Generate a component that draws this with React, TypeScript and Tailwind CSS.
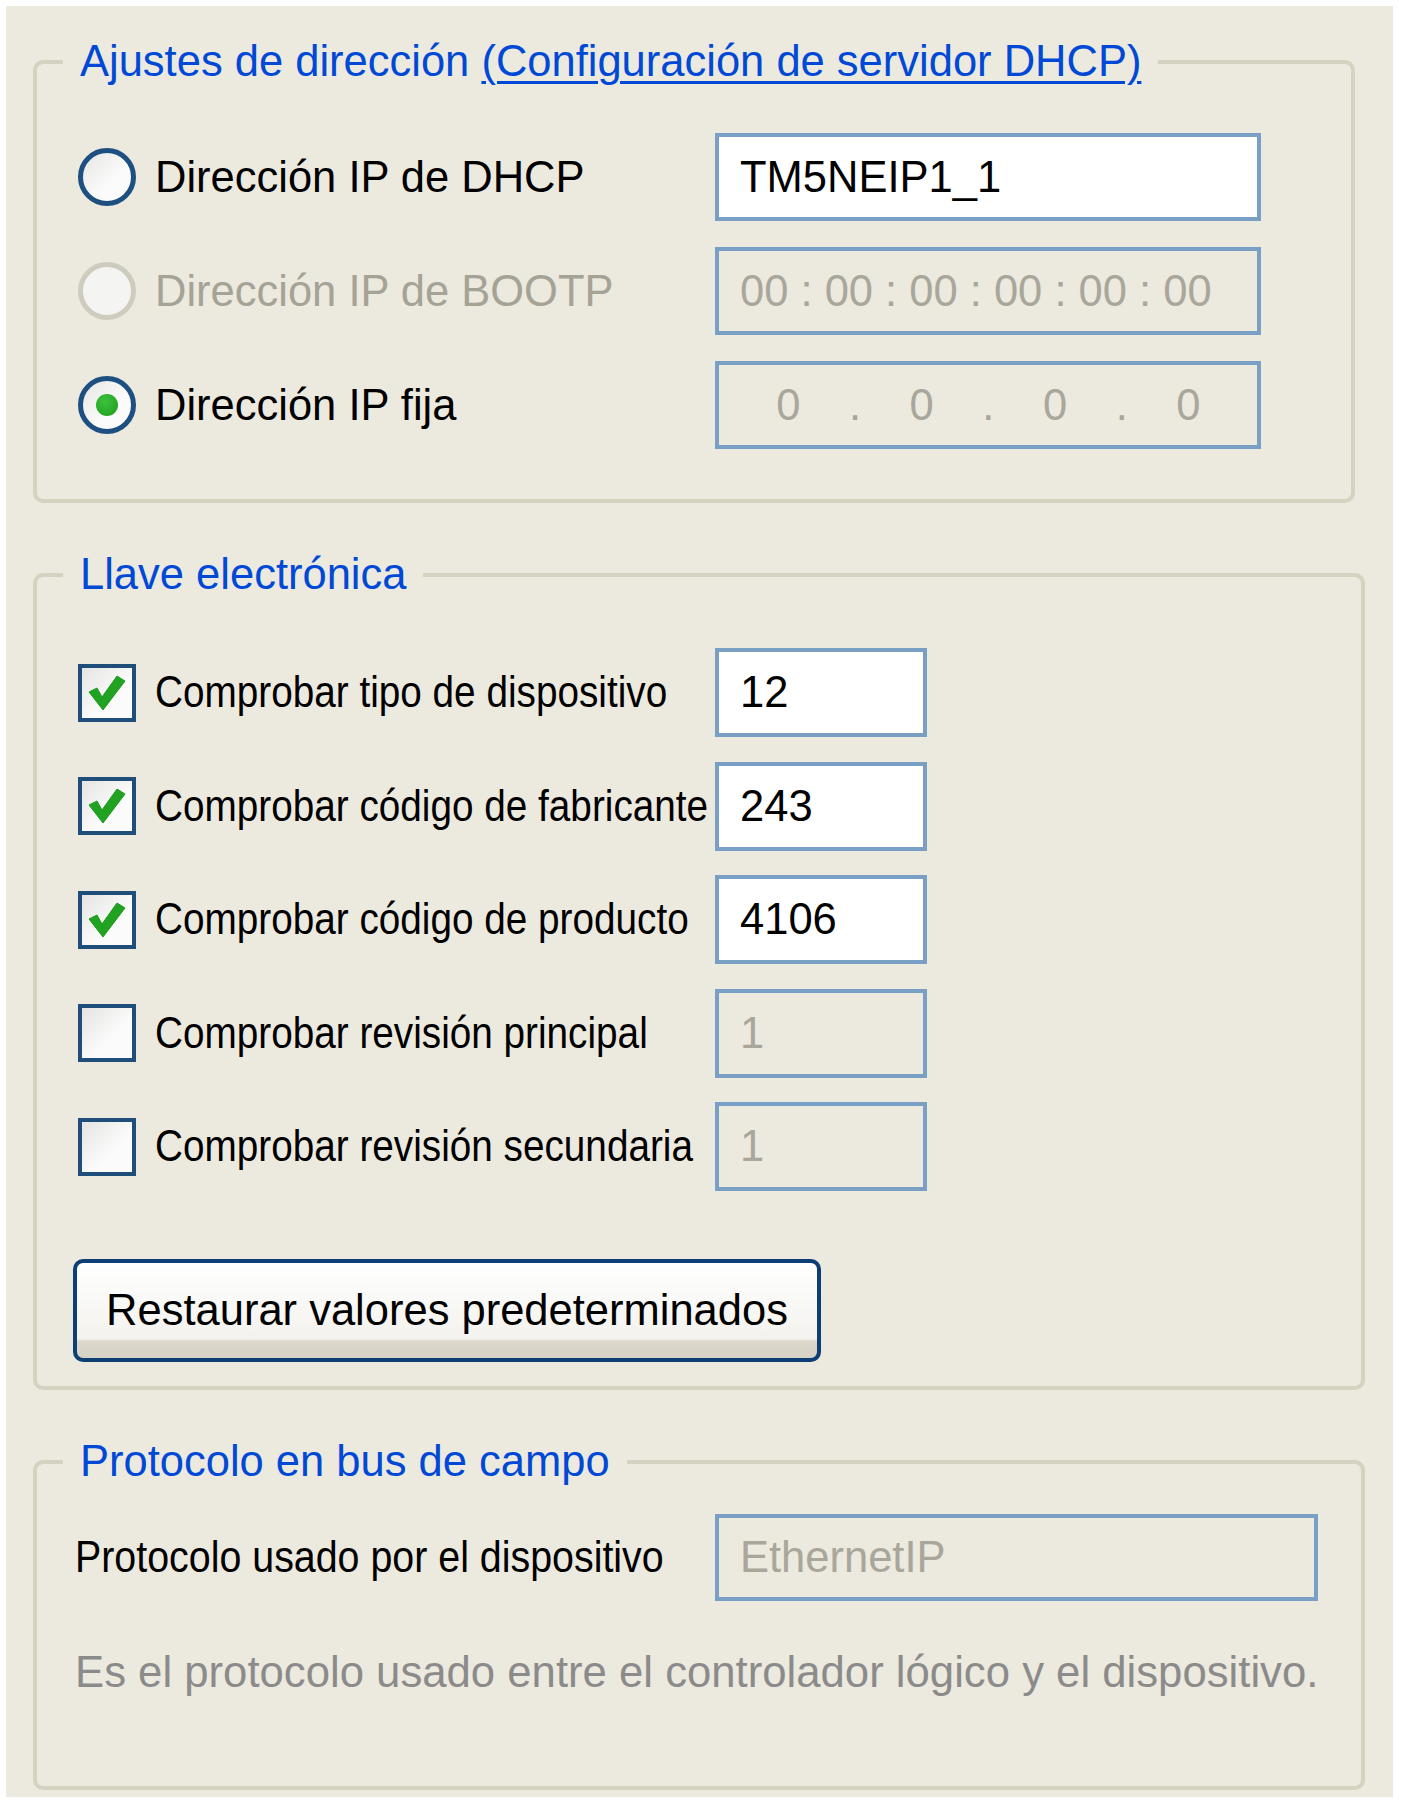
type RowProps = { children: React.ReactNode };

const font = "font-['Liberation_Sans',Arial,sans-serif]";

function Radio({ state }: { state: "off" | "on" | "disabled" }) {
  const ring =
    state === "disabled" ? "border-[#cecbbf] bg-[#f4f4f2]" : "border-[#1d5080] bg-[linear-gradient(135deg,#e6e6e4,#fbfbfb_60%)]";
  return (
    <span className={`flex h-[58px] w-[58px] shrink-0 items-center justify-center rounded-full border-[5px] ${ring}`}>
      {state === "on" && (
        <span className="h-[22px] w-[22px] rounded-full bg-[radial-gradient(circle_at_40%_35%,#3dc23d,#1c9a1c)]" />
      )}
    </span>
  );
}

function Checkbox({ checked }: { checked: boolean }) {
  return (
    <span className="flex h-[58px] w-[58px] shrink-0 items-center justify-center border-[4px] border-[#1f4e7b] bg-[linear-gradient(135deg,#e4e4e2,#fbfbfb_60%)]">
      {checked && (
        <svg viewBox="0 0 50 50" className="h-[50px] w-[50px]">
          <path d="M7 24 L15 20 L20 29 L35 8 L43 13 L21 42 Z" fill="#21a221" stroke="#1e9a1e" strokeWidth="1" strokeLinejoin="round" />
        </svg>
      )}
    </span>
  );
}

function Field({ value, enabled, w, h }: { value: React.ReactNode; enabled: boolean; w: string; h: string }) {
  return (
    <div
      className={`flex items-center border-[4px] border-[#7a9fc5] pl-[21px] ${w} ${h} ${
        enabled ? "bg-white text-black" : "bg-transparent text-[#a9a69b]"
      }`}
    >
      {value}
    </div>
  );
}

function Legend({ children }: RowProps) {
  return <legend className="-ml-[15px] px-[17px] text-[43.5px] leading-[49px] text-[#0048d6]">{children}</legend>;
}

const radios = [
  { label: "Dirección IP de DHCP", state: "off" as const, value: "TM5NEIP1_1", enabled: true },
  { label: "Dirección IP de BOOTP", state: "disabled" as const, value: "00 : 00 : 00 : 00 : 00 : 00", enabled: false },
  { label: "Dirección IP fija", state: "on" as const, value: null, enabled: false },
];

const checks = [
  { label: "Comprobar tipo de dispositivo", checked: true, value: "12" },
  { label: "Comprobar código de fabricante", checked: true, value: "243" },
  { label: "Comprobar código de producto", checked: true, value: "4106" },
  { label: "Comprobar revisión principal", checked: false, value: "1" },
  { label: "Comprobar revisión secundaria", checked: false, value: "1" },
];

function IpValue() {
  const parts = ["0", ".", "0", ".", "0", ".", "0"];
  return (
    <div className="-ml-[21px] flex pl-[36px]">
      {parts.map((p, i) => (
        <span key={i} className="w-[66.7px] text-center">
          {p}
        </span>
      ))}
    </div>
  );
}

export default function App() {
  return (
    <div className={`min-h-screen bg-white pl-[6px] pt-[6px] ${font} text-[43.5px] leading-[49px]`}>
      <div className="flex h-[1791px] w-[1387px] flex-col bg-[#ece9de] pl-[27px] pt-[31px]">
        {/* addressing */}
        <fieldset className="w-[1322px] rounded-[10px] border-[4px] border-[#d4d2c1] pb-[50px] pl-[41px] pt-[47px]">
          <Legend>
            Ajustes de dirección <span className="underline decoration-[3px] underline-offset-[5px]">(Configuración de servidor DHCP)</span>
          </Legend>
          <div className="flex flex-col gap-[26px]">
            {radios.map((r) => (
              <div key={r.label} className="flex h-[88px] items-center">
                <div className="flex w-[637px] items-center gap-[19px]">
                  <Radio state={r.state} />
                  <span className={r.state === "disabled" ? "text-[#a5a396]" : "text-black"}>{r.label}</span>
                </div>
                <Field value={r.value ?? <IpValue />} enabled={r.enabled} w="w-[546px]" h="h-[88px]" />
              </div>
            ))}
          </div>
        </fieldset>

        {/* electronic key */}
        <fieldset className="mt-[47px] w-[1332px] rounded-[10px] border-[4px] border-[#d4d2c1] pb-[24px] pl-[41px] pt-[49px]">
          <Legend>Llave electrónica</Legend>
          <div className="flex flex-col gap-[24.5px]">
            {checks.map((c) => (
              <div key={c.label} className="flex h-[89px] items-center">
                <div className="flex w-[637px] items-center gap-[19px]">
                  <Checkbox checked={c.checked} />
                  <span className="inline-block origin-left scale-x-[0.89] whitespace-nowrap text-black">{c.label}</span>
                </div>
                <Field value={c.value} enabled={c.checked} w="w-[212px]" h="h-[89px]" />
              </div>
            ))}
          </div>
          <button className="mt-[68px] h-[103px] w-[748px] -ml-[5px] rounded-[10px] border-[4px] border-[#0e3f74] bg-[linear-gradient(180deg,#ffffff_0%,#f3f2ee_80%,#dcd8cc_82%,#d6d2c6_100%)] text-center text-black">
            Restaurar valores predeterminados
          </button>
        </fieldset>

        {/* fieldbus */}
        <fieldset className="mt-[47px] w-[1332px] rounded-[10px] border-[4px] border-[#d4d2c1] pb-[90px] pl-[41px] pt-[28px]">
          <Legend>Protocolo en bus de campo</Legend>
          <div className="flex h-[87px] items-center">
            <div className="-ml-[3px] w-[640px]">
              <span className="inline-block origin-left scale-x-[0.905] whitespace-nowrap text-black">
                Protocolo usado por el dispositivo
              </span>
            </div>
            <Field value="EthernetIP" enabled={false} w="w-[603px]" h="h-[87px]" />
          </div>
          <p className="-ml-[3px] mt-[46px] whitespace-nowrap text-[43.7px] text-[#8b8b8b]">
            Es el protocolo usado entre el controlador lógico y el dispositivo.
          </p>
        </fieldset>
      </div>
    </div>
  );
}
